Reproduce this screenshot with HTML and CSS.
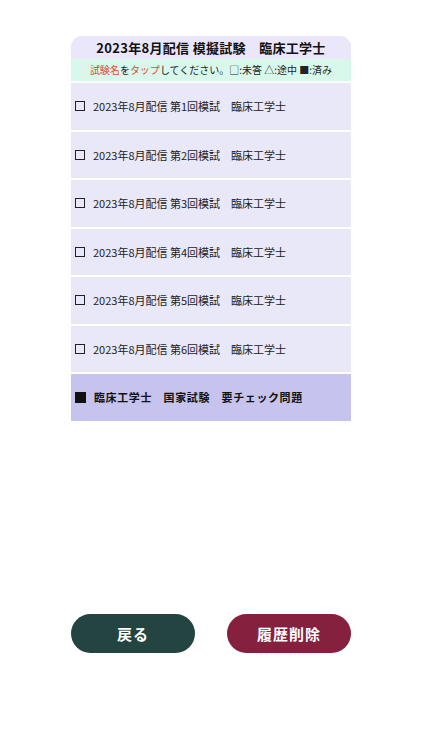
FILE: index.html
```html
<!DOCTYPE html>
<html lang="ja">
<head>
  <meta charset="UTF-8">
  <title>模擬試験 臨床工学士</title>
  <meta name="viewport" content="width=device-width, initial-scale=1.0">
  <link rel="stylesheet" href="styles.css">
</head>
<body>
  <div class="app">
    <div class="panel">
      <div class="panel-title">2023年8月配信 模擬試験　臨床工学士</div>
      <div class="hint"><span class="hint-red">試験名</span>を<span class="hint-red">タップ</span>してください。□:未答 △:途中 ■:済み</div>
      <ul class="exam-list">
        <li class="exam-row"><span class="mark"></span>2023年8月配信 第1回模試　臨床工学士</li>
        <li class="exam-row"><span class="mark"></span>2023年8月配信 第2回模試　臨床工学士</li>
        <li class="exam-row"><span class="mark"></span>2023年8月配信 第3回模試　臨床工学士</li>
        <li class="exam-row"><span class="mark"></span>2023年8月配信 第4回模試　臨床工学士</li>
        <li class="exam-row"><span class="mark"></span>2023年8月配信 第5回模試　臨床工学士</li>
        <li class="exam-row"><span class="mark"></span>2023年8月配信 第6回模試　臨床工学士</li>
        <li class="exam-row exam-row-check"><span class="mark mark-done"></span>臨床工学士　国家試験　要チェック問題</li>
      </ul>
    </div>
    <div class="actions">
      <button class="action-btn back-btn">戻る</button>
      <button class="action-btn delete-btn">履歴削除</button>
    </div>
  </div>
</body>
</html>
```

FILE: styles.css
```css
body {
  margin: 0;
  background: #fff;
  font-family: "Noto Sans CJK JP", "Noto Sans", sans-serif;
  color: #1a1a1a;
}
.app {
  width: 280px;
  margin: 0 auto;
  padding-top: 36px;
}
.panel {
  border-radius: 11px 11px 0 0;
  overflow: hidden;
}
.panel-title {
  background: #e9e7f9;
  height: 23px;
  line-height: 23px;
  text-align: center;
  font-size: 13px;
  font-weight: bold;
  letter-spacing: 0.3px;
  color: #111;
}
.hint {
  background: #d9f8ec;
  height: 22px;
  line-height: 22px;
  text-align: center;
  font-size: 10px;
  color: #222;
}
.hint-red {
  color: #e5433b;
}
.exam-list {
  list-style: none;
  margin: 0;
  padding: 0;
}
.exam-row {
  display: flex;
  align-items: center;
  background: #e9e8f9;
  height: 46.5px;
  margin-top: 2px;
  padding-left: 4px;
  font-size: 11px;
  color: #222;
}
.mark {
  box-sizing: border-box;
  width: 10px;
  height: 10px;
  border: 1.5px solid #222;
  margin-right: 8px;
  flex-shrink: 0;
}
.mark-done {
  width: 11px;
  height: 11px;
  background: #111;
  border-color: #111;
  margin-right: 8px;
}
.exam-row-check {
  background: #c6c3ee;
  font-weight: bold;
  letter-spacing: 0.6px;
  color: #111;
}
.actions {
  display: flex;
  justify-content: space-between;
  margin-top: 193px;
}
.action-btn {
  width: 124px;
  height: 39px;
  border: none;
  border-radius: 20px;
  color: #fff;
  font-family: "Noto Sans CJK JP", "Noto Sans", sans-serif;
  font-size: 15px;
  font-weight: bold;
  letter-spacing: 1px;
  cursor: pointer;
}
.back-btn {
  background: #244442;
}
.delete-btn {
  background: #85213e;
}
```
